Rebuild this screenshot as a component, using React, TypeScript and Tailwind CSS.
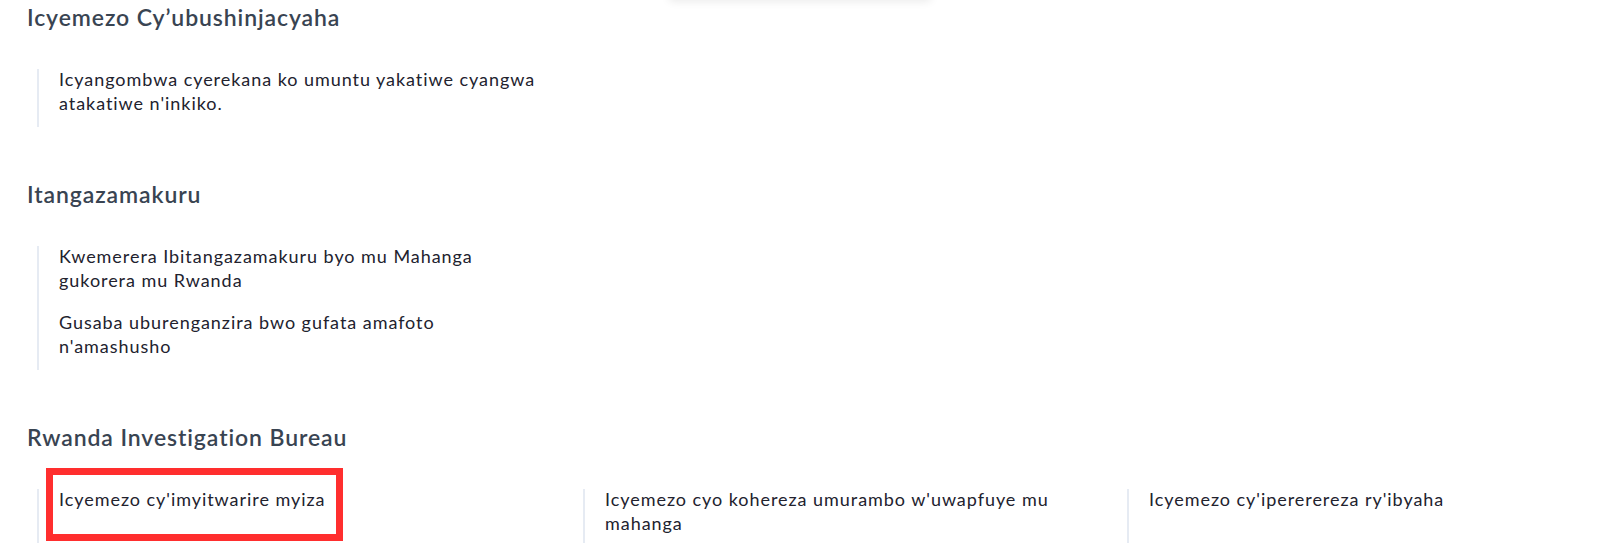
import React from "react";

type Section = {
  title: string;
  items: string[];
};

const sections: Section[] = [
  {
    title: "Icyemezo Cy’ubushinjacyaha",
    items: ["Icyangombwa cyerekana ko umuntu yakatiwe cyangwa atakatiwe n'inkiko."],
  },
  {
    title: "Itangazamakuru",
    items: [
      "Kwemerera Ibitangazamakuru byo mu Mahanga gukorera mu Rwanda",
      "Gusaba uburenganzira bwo gufata amafoto n'amashusho",
    ],
  },
];

const ribItems = [
  "Icyemezo cy'imyitwarire myiza",
  "Icyemezo cyo kohereza umurambo w'uwapfuye mu mahanga",
  "Icyemezo cy'ipererereza ry'ibyaha",
];

const headingCls = "text-[23px] leading-[28px] font-semibold text-[#394452] tracking-[0.9px]";
const itemCls = "text-[18px] leading-[24px] tracking-[0.95px] text-[#22222e] max-w-[486px]";

function ServiceSection({ section, first }: { section: Section; first?: boolean }) {
  return (
    <section className={first ? "mt-[3px]" : "mt-[53px]"}>
      <h2 className={headingCls}>{section.title}</h2>
      <ul className="mt-[38px] ml-[10px] border-l-2 border-[#e6ebf3] pl-[20px] pb-[12px] flex flex-col">
        <div className="-mt-[2px] flex flex-col gap-[18px]">
          {section.items.map((it) => (
            <li key={it} className={itemCls}>
              <a href="#">{it}</a>
            </li>
          ))}
        </div>
      </ul>
    </section>
  );
}

export default function App() {
  return (
    <div
      className="relative w-full h-[543px] overflow-hidden bg-white pl-[27px]"
      style={{ fontFamily: "Lato, 'Noto Sans', sans-serif" }}
    >
      {/* bottom edge of a floating card above the fold */}
      <div className="absolute left-[668px] top-[-60px] w-[264px] h-[60px] bg-white rounded-b-md shadow-[0_2px_8px_rgba(0,0,0,0.08)]" />

      {sections.map((s, i) => (
        <ServiceSection key={s.title} section={s} first={i === 0} />
      ))}

      <section className="mt-[53px]">
        <h2 className={headingCls}>Rwanda Investigation Bureau</h2>
        <div className="mt-[38px] ml-[10px] grid grid-cols-[546px_544px_1fr]">
          {ribItems.map((it, i) => (
            <div key={it} className="relative border-l-2 border-[#e6ebf3] pl-[20px] pb-[12px] flex flex-col">
              <a href="#" className={`block -mt-[2px] ${itemCls}`}>
                {it}
              </a>
              {i === 0 && (
                <div className="absolute left-[7px] top-[-21px] w-[297px] h-[73px] border-[7px] border-[#ff2e2e] pointer-events-none" />
              )}
            </div>
          ))}
        </div>
      </section>
    </div>
  );
}
